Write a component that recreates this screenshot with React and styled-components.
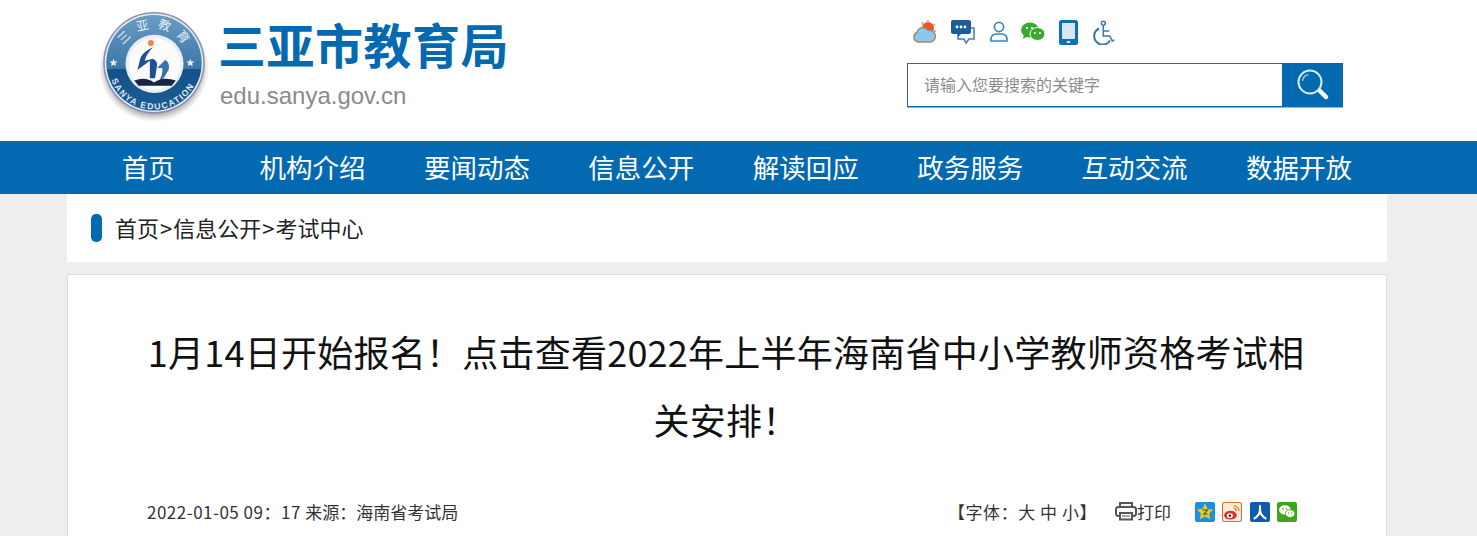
import React from 'react';
import styled, { createGlobalStyle } from 'styled-components';

const Global = createGlobalStyle`
  html, body { margin: 0; padding: 0; height: 536px; overflow: hidden; background: #eeeeee; }
  body { font-family: "Noto Sans CJK SC", "Liberation Sans", sans-serif; color: #222; }
  * { box-sizing: border-box; }
`;

const Header = styled.header`
  height: 141px;
  background: #fff;
  display: flex;
  justify-content: space-between;
  padding: 12px 134px 0 98px;
`;

const Brand = styled.div`
  display: flex;
  gap: 8px;
`;

const BrandText = styled.div`
  display: flex;
  flex-direction: column;
  padding-top: 3px;
`;

const SiteName = styled.div`
  font-size: 48px;
  font-weight: 700;
  line-height: 56px;
  letter-spacing: 0.5px;
  color: #0369b1;
`;

const SiteUrl = styled.div`
  font-family: "Liberation Sans", sans-serif;
  font-size: 24px;
  line-height: 28px;
  margin: 11px 0 0 2px;
  color: #8a8a8a;
`;

const Tools = styled.div`
  width: 436px;
  display: flex;
  flex-direction: column;
  padding-top: 7px;
`;

const ToolIcons = styled.div`
  display: flex;
  align-items: center;
  gap: 13.8px;
  height: 26px;
  padding-left: 6px;
`;

const SearchBox = styled.div`
  display: flex;
  height: 45px;
  margin-top: 18px;
  border-bottom: 1px solid #8cb9d9;
`;

const SearchInput = styled.div`
  flex: 1;
  border: 1px solid #0369b1;
  border-left-color: #55606a;
  border-top-color: #55606a;
  border-right: none;
  background: #fff;
  font-size: 16px;
  line-height: 41px;
  padding-left: 16px;
  color: #8c8c8c;
`;

const SearchButton = styled.div`
  width: 61px;
  background: #0369b1;
  display: flex;
  align-items: center;
  justify-content: center;
`;

const Nav = styled.nav`
  height: 53px;
  background: #0369b1;
  padding-left: 66px;
  display: grid;
  grid-template-columns: repeat(8, 164.4px);
`;

const NavItem = styled.a`
  color: #fff;
  font-size: 26.5px;
  line-height: 51px;
  text-align: center;
`;

const Wrap = styled.main`
  width: 1320px;
  margin-left: 67px;
`;

const Crumbs = styled.div`
  height: 68px;
  background: #fff;
  display: flex;
  align-items: center;
  gap: 13px;
  padding: 0 0 2px 24px;
  font-size: 22px;
  color: #222;
`;

const CrumbMark = styled.span`
  width: 11px;
  height: 28px;
  margin-top: 2px;
  border-radius: 5px;
  background: #0369b1;
`;

const CrumbSep = styled.span`
  margin: 0 1px;
`;

const Article = styled.article`
  margin-top: 12px;
  height: 262px;
  background: #fff;
  border: 1px solid #dddddd;
  border-bottom: none;
  padding: 42px 79px 0;
`;

const Title = styled.h1`
  margin: 0 0 0 -2px;
  width: 1162px;
  font-size: 36px;
  font-weight: 400;
  line-height: 68px;
  letter-spacing: 0.24px;
  text-align: center;
  color: #111;
`;

const Meta = styled.div`
  display: flex;
  align-items: center;
  justify-content: space-between;
  margin-top: 43px;
  height: 30px;
  font-size: 17px;
  color: #333;
`;

const Source = styled.div`
  display: flex;
`;

const DateText = styled.span`
  letter-spacing: 0.5px;
  margin-right: 4.5px;
`;

const MetaActions = styled.div`
  display: flex;
  align-items: center;
`;

const FontSize = styled.span`
  margin-right: 18px;
  letter-spacing: 0.55px;
`;

const Print = styled.span`
  display: flex;
  align-items: center;
  margin-right: 24px;
`;

const Shares = styled.span`
  display: flex;
  gap: 7.3px;
  margin: 2px 10px 0 0;
`;

const Star = ({ x, y }) => (
  <path
    transform={`translate(${x} ${y})`}
    d="M0 -4 L1.100 -1.300 L3.900 -1.200 L1.700 .6 L2.400 3.300 L0 1.800 L-2.400 3.300 L-1.700 .6 L-3.900 -1.200 L-1.100 -1.300 Z"
    fill="#e6eef5"
  />
);

const Logo = () => (
  <svg width="112" height="112" viewBox="0 0 108 108">
    <defs>
      <linearGradient id="ring" x1="0" y1="0" x2="0" y2="1">
        <stop offset="0" stopColor="#6a9cc2" />
        <stop offset="0.56" stopColor="#3a77a8" />
        <stop offset="0.57" stopColor="#14528a" />
        <stop offset="1" stopColor="#1c5c93" />
      </linearGradient>
      <radialGradient id="glow" cx="0.5" cy="0.5" r="0.5">
        <stop offset="0.85" stopColor="#666" stopOpacity="0.5" />
        <stop offset="1" stopColor="#888" stopOpacity="0" />
      </radialGradient>
      <path id="topArc" d="M20 50 A34 34 0 0 1 88 50" />
      <path id="botArc" d="M10 50 A44 44 0 0 0 98 50" />
    </defs>
    <ellipse cx="54" cy="54" rx="53" ry="52" fill="url(#glow)" />
    <circle cx="54" cy="49" r="49" fill="#8c8fb5" />
    <circle cx="54" cy="49" r="47.500" fill="#e4ebf2" />
    <circle cx="54" cy="49" r="46" fill="url(#ring)" />
    <circle cx="54.500" cy="50" r="28" fill="#e8eef3" />
    <circle cx="54.500" cy="50" r="25" fill="#fbfbfb" />
    <circle cx="51" cy="30" r="2.900" fill="#ee8a3a" />
    <path d="M53 34 Q44 38 41 44 L38 56 L50 47 L50 64 L55 64 L57 51 Q57 47 53 45 L45 47 Q47 40 53 34 Z" fill="#1f4f96" />
    <path d="M57 54 L65 46 Q70 50 68 56 L62 66 L58 68 Q63 60 62 54 Z" fill="#3c6fae" />
    <path d="M35 66 Q46 62 54 68 Q63 62 75 66 L71 71 L39 71 Z" fill="#1a2542" />
    <text fontSize="12" fill="#e6eef5" fontFamily='"Noto Sans CJK SC", sans-serif' letterSpacing="7">
      <textPath href="#topArc" startOffset="18">三亚教育</textPath>
    </text>
    <text fontSize="8.400" fontWeight="700" fill="#dfe9f2" fontFamily='"Liberation Sans", sans-serif' letterSpacing="1.400">
      <textPath href="#botArc" startOffset="16">SANYA EDUCATION</textPath>
    </text>
    <Star x={15} y={49} />
    <Star x={89} y={49} />
  </svg>
);

const Weather = () => (
  <svg width="24" height="26" viewBox="0 0 24 26">
    <circle cx="15" cy="9" r="6" fill="#e8562a" />
    <path d="M15 1v3M22 5l-2 2M23 12h-3M9 3l1 3" stroke="#c9a27a" strokeWidth="1.600" />
    <path d="M5 23 a5 5 0 0 1 -1 -9.500 a6 6 0 0 1 11 -2 a5 5 0 0 1 3 11.500 Z" fill="#8cc8ea" stroke="#9b8a78" strokeWidth="1.400" />
  </svg>
);

const Chat = () => (
  <svg width="25" height="26" viewBox="0 0 25 26">
    <path d="M7 9h16v11h-5l-3 4-2-4H7Z" fill="#fff" stroke="#3a7fb6" strokeWidth="1.500" />
    <path d="M2 1h16a2 2 0 0 1 2 2v10a2 2 0 0 1-2 2H10l-3 3v-3H2a2 2 0 0 1-2-2V3a2 2 0 0 1 2-2Z" fill="#1c5e9c" />
    <circle cx="6" cy="8" r="1.400" fill="#fff" />
    <circle cx="10" cy="8" r="1.400" fill="#fff" />
    <circle cx="14" cy="8" r="1.400" fill="#fff" />
  </svg>
);

const Person = () => (
  <svg width="18" height="22" viewBox="0 0 18 22" fill="none" stroke="#3a87c4" strokeWidth="1.700">
    <circle cx="9" cy="6" r="4.600" />
    <path d="M1 20v-2a5 5 0 0 1 5-5h6a5 5 0 0 1 5 5v2Z" />
  </svg>
);

const Wechat = () => (
  <svg width="24" height="20" viewBox="0 0 24 20">
    <ellipse cx="9" cy="8" rx="9" ry="7.500" fill="#3aa92f" />
    <path d="M3 12l-1 5 5-3Z" fill="#3aa92f" />
    <ellipse cx="16.500" cy="12" rx="7.500" ry="6.500" fill="#3aa92f" stroke="#fff" strokeWidth="1" />
    <circle cx="6" cy="6" r="1.100" fill="#fff" />
    <circle cx="11" cy="6" r="1.100" fill="#fff" />
    <circle cx="14" cy="11" r="1" fill="#fff" />
    <circle cx="19" cy="11" r="1" fill="#fff" />
  </svg>
);

const Phone = () => (
  <svg width="19" height="25" viewBox="0 0 19 25">
    <rect width="19" height="25" rx="2.500" fill="#0f6fb5" />
    <rect x="3" y="3" width="13" height="16" fill="#d8e8f3" />
    <rect x="7.500" y="21" width="4" height="2" rx="1" fill="#d8e8f3" />
  </svg>
);

const Wheelchair = () => (
  <svg width="23" height="25" viewBox="0 0 23 25" fill="none" stroke="#3a75ae" strokeWidth="1.500">
    <circle cx="11.300" cy="3.300" r="2" />
    <path d="M11.300 6v10h6.500l2.500 5 2-1" />
    <path d="M11.300 11h6" />
    <path d="M7 8.500a8.500 8.500 0 1 0 11 12" strokeWidth="2" />
  </svg>
);

const SearchIcon = () => (
  <svg width="34" height="34" viewBox="0 0 34 34" fill="none">
    <circle cx="14" cy="14" r="11.500" stroke="#dcebf5" strokeWidth="2" />
    <path d="M6.500 13a7.500 7.500 0 0 1 6-6.500" stroke="#9cc4df" strokeWidth="1.500" />
    <path d="M24 23l6 6" stroke="#fff" strokeWidth="4.500" strokeLinecap="round" />
  </svg>
);

const Printer = () => (
  <svg width="22" height="20" viewBox="0 0 22 20" fill="none" stroke="#555" strokeWidth="2">
    <path d="M5 6V2h12v4" />
    <rect x="1" y="6" width="20" height="9" rx="2.500" />
    <rect x="5" y="12" width="12" height="6.500" fill="#fff" />
    <path d="M7 15h8" strokeWidth="1" />
  </svg>
);

const Qzone = () => (
  <svg width="20" height="20" viewBox="0 0 19 19">
    <rect width="19" height="19" rx="2" fill="#1b8fe0" />
    <path d="M9.500 1.500l2.400 5 5.500.7-4 3.800 1 5.500-4.900-2.700-4.900 2.700 1-5.500-4-3.800 5.500-.7Z" fill="#f6c522" />
    <path d="M7 7.500h5l-3.500 4h3.500" fill="none" stroke="#2f7d3a" strokeWidth="1.300" />
  </svg>
);

const Weibo = () => (
  <svg width="20" height="20" viewBox="0 0 19 19">
    <rect x=".5" y=".5" width="18" height="18" rx="2" fill="#fbeee4" stroke="#e8682a" />
    <ellipse cx="8" cy="12.500" rx="6" ry="4.200" fill="#d9342b" />
    <ellipse cx="7.500" cy="13" rx="2.800" ry="2.200" fill="#fff" />
    <circle cx="7.500" cy="13" r="1.200" fill="#222" />
    <path d="M11 3.500a5 5 0 0 1 5 5M11 6a2.500 2.500 0 0 1 2.500 2.500" fill="none" stroke="#ee8a2a" strokeWidth="1.400" />
  </svg>
);

const Renren = () => (
  <svg width="20" height="20" viewBox="0 0 19 19">
    <rect width="19" height="19" rx="2" fill="#0d5cb0" />
    <path d="M9.500 3v4c0 4-2 7-6 9M9.500 7c0 4 2 7 6 9" fill="none" stroke="#fff" strokeWidth="2" />
  </svg>
);

const WechatShare = () => (
  <svg width="20" height="20" viewBox="0 0 19 19">
    <rect width="19" height="19" rx="2" fill="#3fa51f" />
    <ellipse cx="7.500" cy="7.500" rx="5.500" ry="4.500" fill="#fff" />
    <ellipse cx="12.500" cy="11" rx="4.500" ry="3.700" fill="#fff" stroke="#3fa51f" strokeWidth=".8" />
    <circle cx="5.800" cy="6.500" r=".8" fill="#3fa51f" />
    <circle cx="9" cy="6.500" r=".8" fill="#3fa51f" />
    <circle cx="11" cy="10.500" r=".7" fill="#3fa51f" />
    <circle cx="14" cy="10.500" r=".7" fill="#3fa51f" />
  </svg>
);

const navItems = ['首页', '机构介绍', '要闻动态', '信息公开', '解读回应', '政务服务', '互动交流', '数据开放'];

export default function App() {
  return (
    <>
      <Global />
      <Header>
        <Brand>
          <Logo />
          <BrandText>
            <SiteName>三亚市教育局</SiteName>
            <SiteUrl>edu.sanya.gov.cn</SiteUrl>
          </BrandText>
        </Brand>
        <Tools>
          <ToolIcons>
            <Weather />
            <Chat />
            <Person />
            <Wechat />
            <Phone />
            <Wheelchair />
          </ToolIcons>
          <SearchBox>
            <SearchInput>请输入您要搜索的关键字</SearchInput>
            <SearchButton>
              <SearchIcon />
            </SearchButton>
          </SearchBox>
        </Tools>
      </Header>
      <Nav>
        {navItems.map((item) => (
          <NavItem key={item}>{item}</NavItem>
        ))}
      </Nav>
      <Wrap>
        <Crumbs>
          <CrumbMark />
          <span>首页<CrumbSep>&gt;</CrumbSep>信息公开<CrumbSep>&gt;</CrumbSep>考试中心</span>
        </Crumbs>
        <Article>
          <Title>1月14日开始报名！点击查看2022年上半年海南省中小学教师资格考试相关安排！</Title>
          <Meta>
            <Source>
              <DateText>2022-01-05 09：17</DateText>
              <span>来源：海南省考试局</span>
            </Source>
            <MetaActions>
              <FontSize>【字体：大 中 小】</FontSize>
              <Print>
                <Printer />
                打印
              </Print>
              <Shares>
                <Qzone />
                <Weibo />
                <Renren />
                <WechatShare />
              </Shares>
            </MetaActions>
          </Meta>
        </Article>
      </Wrap>
    </>
  );
}
